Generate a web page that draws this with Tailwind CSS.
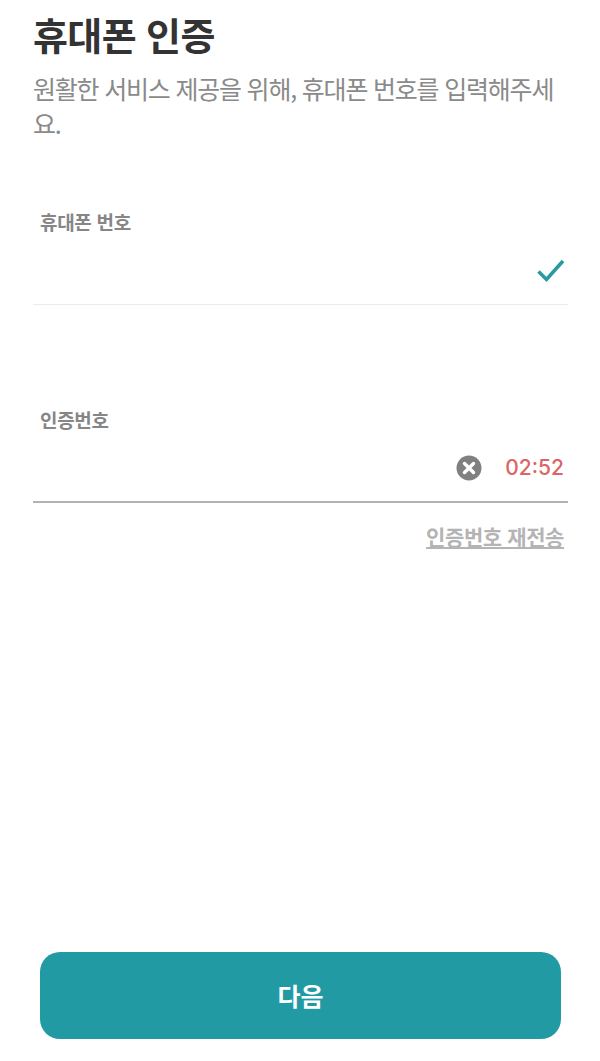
<!DOCTYPE html>
<html lang="ko">
<head>
  <meta charset="UTF-8">
  <title>휴대폰 인증</title>
  <script src="https://cdn.jsdelivr.net/npm/@tailwindcss/browser@4"></script>
</head>
<body class="bg-white font-['Noto_Sans_CJK_KR',sans-serif]">
  <div class="h-[1061px] w-[600px] flex flex-col overflow-hidden">
    <!-- 헤더 -->
    <div class="pl-[33px] pr-[40px] pt-[9px]">
      <h1 class="text-[38px] leading-[50px] font-bold tracking-[-0.6px] text-[#333333]">휴대폰 인증</h1>
      <p class="mt-[12px] text-[25px] leading-[35px] tracking-[-1.2px] text-[#8a8a8a]">원활한 서비스 제공을 위해, 휴대폰 번호를 입력해주세요.</p>
    </div>

    <!-- 휴대폰 번호 -->
    <div class="ml-[33px] mr-[32px] mt-[67px]">
      <label class="block pl-[7px] text-[19px] leading-[28px] font-bold tracking-[-0.3px] text-[#868686]">휴대폰 번호</label>
      <div class="h-[69px] flex items-center justify-end border-b border-[#ebebeb] pr-[2px] pt-[2px]">
        <svg class="w-[30px] h-[30px]" viewBox="0 0 30 30" fill="none" stroke="#2a9aa2" stroke-width="3.6">
          <path d="M2.5 15.5 L10.5 23.5 L27 5"/>
        </svg>
      </div>
    </div>

    <!-- 인증번호 -->
    <div class="ml-[33px] mr-[32px] mt-[101px]">
      <label class="block pl-[7px] text-[19px] leading-[28px] font-bold tracking-[-0.3px] text-[#868686]">인증번호</label>
      <div class="h-[69px] flex items-center justify-end border-b-2 border-[#b3b3b3] pr-[4px] pt-[1px] gap-[23px]">
        <svg class="w-[26px] h-[26px]" viewBox="0 0 26 26">
          <circle cx="13" cy="13" r="12.5" fill="#808080"/>
          <path d="M8.5 8.5 L17.5 17.5 M17.5 8.5 L8.5 17.5" stroke="#ffffff" stroke-width="3.4" stroke-linecap="round"/>
        </svg>
        <span class="text-[21px] leading-[30px] font-medium text-[#dc6464] font-['Inter',sans-serif]">02:52</span>
      </div>
      <div class="mt-[18px] pr-[4px] text-right">
        <a class="text-[21px] leading-[30px] font-bold tracking-[-0.4px] text-[#b4b4b4] underline underline-offset-2">인증번호 재전송</a>
      </div>
    </div>

    <!-- 다음 버튼 -->
    <div class="mt-auto pl-[40px] pr-[39px] pb-[22px]">
      <button class="w-full h-[87px] rounded-[20px] bg-[#219aa3] text-white text-[25px] font-bold">다음</button>
    </div>
  </div>
</body>
</html>
